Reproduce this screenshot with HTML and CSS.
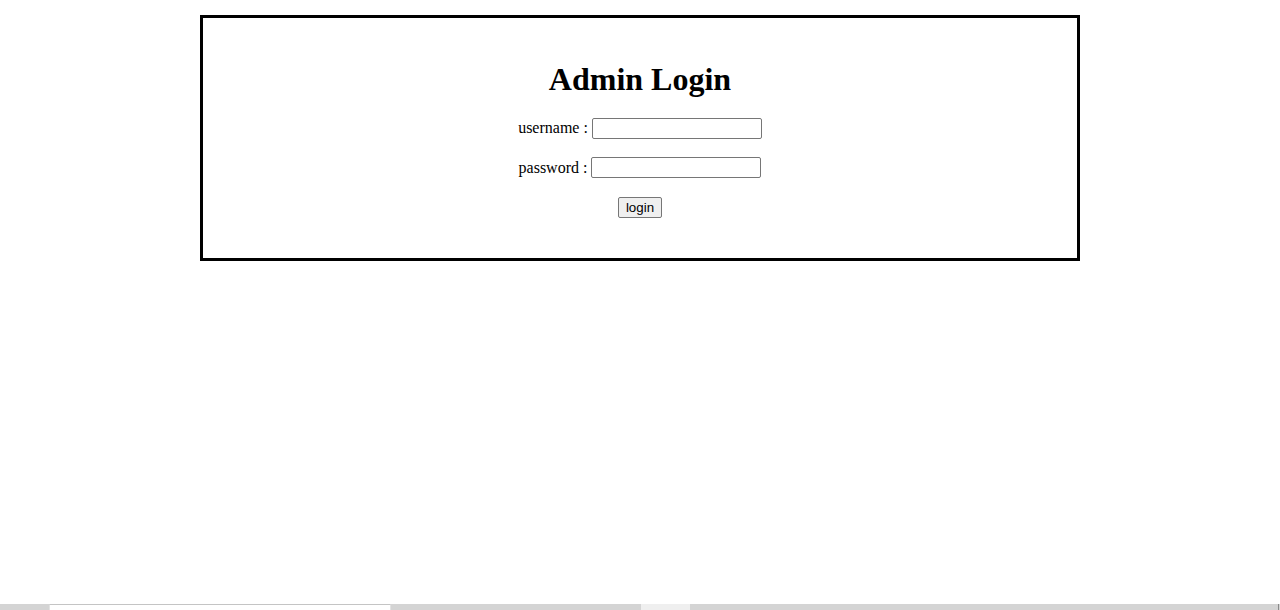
FILE: index.html
```html
<!DOCTYPE html>
<html lang="en">
<head>
<meta charset="utf-8">
<title>Admin Login</title>
<link rel="stylesheet" href="styles.css">
</head>
<body>
  <main class="page">
    <form class="login-box">
      <h1 class="title">Admin Login</h1>
      <div class="row">
        <label class="label" for="u">username :</label>
        <input class="field" id="u" type="text">
      </div>
      <div class="row">
        <label class="label" for="p">password :</label>
        <input class="field" id="p" type="password">
      </div>
      <div class="row">
        <button class="btn" type="button">login</button>
      </div>
    </form>
  </main>
  <div class="strip">
    <div class="strip-gray s1"></div>
    <div class="strip-white"></div>
    <div class="strip-gray s2"></div>
    <div class="strip-light"></div>
    <div class="strip-gray s3"></div>
    <div class="strip-edge"></div>
  </div>
</body>
</html>
```
FILE: styles.css
```css
html, body {
  margin: 0;
  padding: 0;
  background: #ffffff;
}
body {
  min-height: 610px;
  display: flex;
  flex-direction: column;
  font-family: "Liberation Serif", "Times New Roman", serif;
  color: #000;
}
.page {
  display: flex;
  justify-content: center;
  padding-top: 15px;
}
.login-box {
  width: 874px;
  border: 3px solid #000;
  padding: 43px 0 40px;
  display: flex;
  flex-direction: column;
  align-items: center;
  gap: 18.5px;
  margin: 0;
}
.title {
  margin: 0 0 2px;
  font-size: 32px;
  line-height: 36px;
  font-weight: bold;
}
.row {
  display: flex;
  align-items: center;
  justify-content: center;
  gap: 4px;
  height: 21px;
}
.label {
  font-size: 16px;
  line-height: 18px;
}
.field {
  box-sizing: border-box;
  width: 170px;
  height: 21px;
  margin: 0;
  padding: 1px 2px;
  border: 1px solid #767676;
  border-radius: 2px;
  background: #fff;
  font-family: "Liberation Sans", Arial, sans-serif;
  font-size: 13.33px;
}
.btn {
  box-sizing: border-box;
  height: 21px;
  width: 44px;
  margin: 0;
  padding: 0;
  border: 1px solid #767676;
  border-radius: 2px;
  background: #efefef;
  color: #000;
  font-family: "Liberation Sans", Arial, sans-serif;
  font-size: 13.33px;
  line-height: 19px;
}
.strip {
  margin-top: auto;
  height: 6px;
  display: flex;
  background: #d4d4d4;
}
.strip-gray { background: #d4d4d4; }
.s1 { width: 49px; }
.s2 { width: 250px; }
.s3 { flex: 1; }
.strip-white {
  box-sizing: border-box;
  width: 342px;
  background: #fff;
  border-top: 1px solid #c4c4c4;
  border-left: 1px solid #e2e2e2;
  border-right: 1px solid #e2e2e2;
}
.strip-light {
  width: 49px;
  background: #efefef;
}
.strip-edge {
  width: 1px;
  margin-right: 1px;
  background: #8a8a8a;
}
```
